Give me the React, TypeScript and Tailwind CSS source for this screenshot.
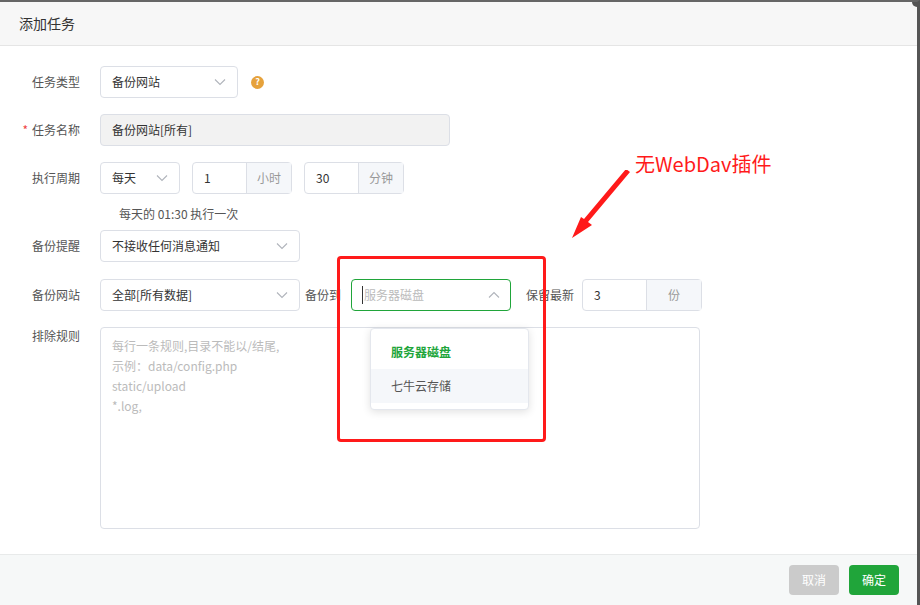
import React from "react";

const F = { fontFamily: '"Noto Sans CJK SC","Noto Sans",sans-serif' };
const Chev = ({ up = false }: { up?: boolean }) => (
  <svg width="12" height="12" viewBox="0 0 12 12" className="text-[#b0b4bb]">
    <path d={up ? "M1 8.5 L6 3.5 L11 8.5" : "M1 3.5 L6 8.5 L11 3.5"} fill="none" stroke="currentColor" strokeWidth="1.1" />
  </svg>
);

const Label = ({ children, req = false }: { children: React.ReactNode; req?: boolean }) => (
  <div className="w-[100px] pr-[20px] text-right text-[12px] text-[#555] shrink-0">
    {req && <span className="text-[#ef4444] mr-1">*</span>}
    {children}
  </div>
);

export default function App() {
  return (
    <div style={F} className="relative w-[920px] h-[605px] bg-white overflow-hidden border-t-[2px] border-[#666] border-r-[3px] border-r-[#555]">
      <div className="h-[44px] bg-[#f7f7f7] border-b border-[#e5e5e5] flex items-center pl-[19px] text-[14px] text-[#333]">添加任务</div>
      <div className="w-[10px] h-[10px] rounded-full bg-[#555] absolute right-[-5px] top-[-5px]" />
      <div className="pt-[20px] text-[12px] text-[#333]">
        <div className="flex items-center h-[32px]">
          <Label>任务类型</Label>
          <div className="w-[138px] h-[32px] border border-[#dcdfe6] rounded flex items-center justify-between px-[11px]">备份网站<Chev /></div>
          <div className="ml-[13px] w-[13px] h-[13px] rounded-full bg-[#e6a23c] text-white text-[9px] font-bold flex items-center justify-center">?</div>
        </div>
        <div className="flex items-center h-[32px] mt-[16px]">
          <Label req>任务名称</Label>
          <div className="w-[350px] h-[32px] border border-[#dcdfe6] bg-[#f2f2f2] rounded flex items-center px-[11px]">备份网站[所有]</div>
        </div>
        <div className="flex items-center h-[32px] mt-[16px]">
          <Label>执行周期</Label>
          <div className="w-[80px] h-[32px] border border-[#dcdfe6] rounded flex items-center justify-between px-[11px]">每天<Chev /></div>
          <div className="ml-[12px] w-[100px] h-[32px] border border-[#dcdfe6] rounded flex">
            <div className="flex-1 flex items-center px-[11px]">1</div>
            <div className="w-[45px] bg-[#f5f7fa] border-l border-[#dcdfe6] flex items-center justify-center text-[#999]">小时</div>
          </div>
          <div className="ml-[12px] w-[100px] h-[32px] border border-[#dcdfe6] rounded flex">
            <div className="flex-1 flex items-center px-[11px]">30</div>
            <div className="w-[45px] bg-[#f5f7fa] border-l border-[#dcdfe6] flex items-center justify-center text-[#999]">分钟</div>
          </div>
        </div>
        <div className="pl-[119px] mt-[11px] h-[20px] text-[#555]">每天的 01:30 执行一次</div>
        <div className="flex items-center h-[32px] mt-[5px]">
          <Label>备份提醒</Label>
          <div className="w-[200px] h-[32px] border border-[#dcdfe6] rounded flex items-center justify-between px-[11px]">不接收任何消息通知<Chev /></div>
        </div>
        <div className="flex items-center h-[32px] mt-[17px]">
          <Label>备份网站</Label>
          <div className="w-[200px] h-[32px] border border-[#dcdfe6] rounded flex items-center justify-between px-[11px]">全部[所有数据]<Chev /></div>
          <div className="ml-[5px] text-[#555]">备份到</div>
          <div className="ml-[10px] w-[160px] h-[32px] border border-[#20a53a] rounded flex items-center justify-between px-[10px] text-[#bbb]">
            <span className="border-l border-[#333] pl-px">服务器磁盘</span><Chev up />
          </div>
          <div className="ml-[15px] text-[#555]">保留最新</div>
          <div className="ml-[8px] w-[120px] h-[32px] border border-[#dcdfe6] rounded flex">
            <div className="flex-1 flex items-center px-[11px]">3</div>
            <div className="w-[55px] bg-[#f5f7fa] border-l border-[#dcdfe6] flex items-center justify-center text-[#999]">份</div>
          </div>
        </div>
        <div className="flex mt-[16px]">
          <Label>排除规则</Label>
          <div className="w-[600px] h-[202px] border border-[#dcdfe6] rounded px-[11px] py-[8px] text-[#bbb] leading-[20px]">
            每行一条规则,目录不能以/结尾,<br />示例：data/config.php<br />static/upload<br />*.log,
          </div>
        </div>
      </div>
      <div className="absolute left-0 right-0 bottom-0 h-[51px] bg-[#f6f8f8] border-t border-[#e8eaea] flex items-center justify-end pr-[18px] gap-[10px] text-[12px] text-white">
        <div className="w-[50px] h-[30px] rounded bg-[#cbcbcb] flex items-center justify-center">取消</div>
        <div className="w-[50px] h-[30px] rounded bg-[#20a53a] flex items-center justify-center">确定</div>
      </div>
      {/* dropdown */}
      <div className="absolute left-[370px] top-[326px] w-[159px] h-[82px] bg-white border border-[#e4e7ed] rounded shadow-[0_2px_8px_rgba(0,0,0,0.12)] py-[6px] text-[12px]">
        <div className="h-[34px] flex items-center px-[20px] font-bold text-[#20a53a]">服务器磁盘</div>
        <div className="h-[34px] flex items-center px-[20px] bg-[#f5f7fa] text-[#555]">七牛云存储</div>
      </div>
      <div className="absolute left-[337px] top-[254px] w-[209px] h-[186px] border-[3px] border-[#ff1a1a] rounded-sm" />
      <div className="absolute left-[635px] top-[152px] text-[20px] text-[#ff1a1a] leading-none">无WebDav插件</div>
      <svg className="absolute left-[568px] top-[168px]" width="64" height="72" viewBox="0 0 64 72">
        <path d="M62 2 L20 52 L24 55 L4 68 L13 47 L16 49 L58 -1 Z" fill="#ff1a1a" />
      </svg>
    </div>
  );
}
